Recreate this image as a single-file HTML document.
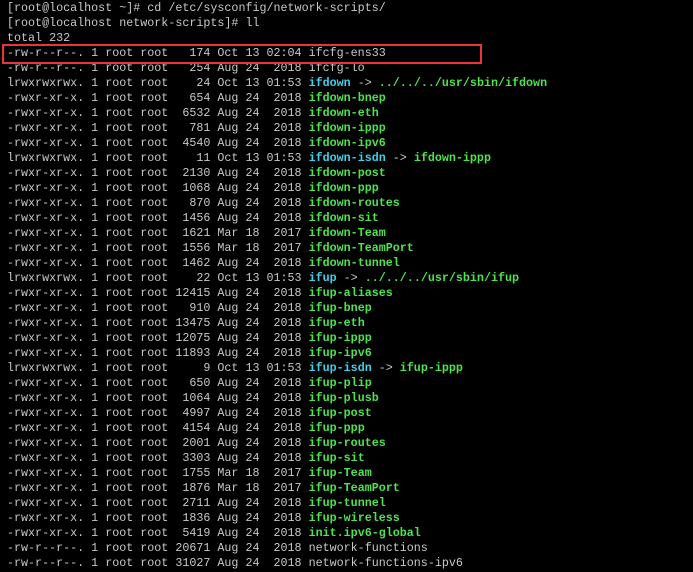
<!DOCTYPE html>
<html><head><style>
html,body{margin:0;padding:0;background:#000;width:693px;height:572px;overflow:hidden}
pre{margin:0;padding:1px 0 0 7px;font-family:"Liberation Mono",monospace;font-size:11.7px;line-height:15px;color:#c8c8c8}
.c{color:#3fd0ea;font-weight:bold}
.g{color:#4ee24e;font-weight:bold}
.box{position:absolute;left:2px;top:44px;width:476px;height:16px;border:2px solid #e8343a}
</style></head><body>
<div class="box"></div>
<pre>[root@localhost ~]# cd /etc/sysconfig/network-scripts/
[root@localhost network-scripts]# ll
total 232
-rw-r--r--. 1 root root   174 Oct 13 02:04 ifcfg-ens33
-rw-r--r--. 1 root root   254 Aug 24  2018 ifcfg-lo
lrwxrwxrwx. 1 root root    24 Oct 13 01:53 <span class="c">ifdown</span> -&gt; <span class="g">../../../usr/sbin/ifdown</span>
-rwxr-xr-x. 1 root root   654 Aug 24  2018 <span class="g">ifdown-bnep</span>
-rwxr-xr-x. 1 root root  6532 Aug 24  2018 <span class="g">ifdown-eth</span>
-rwxr-xr-x. 1 root root   781 Aug 24  2018 <span class="g">ifdown-ippp</span>
-rwxr-xr-x. 1 root root  4540 Aug 24  2018 <span class="g">ifdown-ipv6</span>
lrwxrwxrwx. 1 root root    11 Oct 13 01:53 <span class="c">ifdown-isdn</span> -&gt; <span class="g">ifdown-ippp</span>
-rwxr-xr-x. 1 root root  2130 Aug 24  2018 <span class="g">ifdown-post</span>
-rwxr-xr-x. 1 root root  1068 Aug 24  2018 <span class="g">ifdown-ppp</span>
-rwxr-xr-x. 1 root root   870 Aug 24  2018 <span class="g">ifdown-routes</span>
-rwxr-xr-x. 1 root root  1456 Aug 24  2018 <span class="g">ifdown-sit</span>
-rwxr-xr-x. 1 root root  1621 Mar 18  2017 <span class="g">ifdown-Team</span>
-rwxr-xr-x. 1 root root  1556 Mar 18  2017 <span class="g">ifdown-TeamPort</span>
-rwxr-xr-x. 1 root root  1462 Aug 24  2018 <span class="g">ifdown-tunnel</span>
lrwxrwxrwx. 1 root root    22 Oct 13 01:53 <span class="c">ifup</span> -&gt; <span class="g">../../../usr/sbin/ifup</span>
-rwxr-xr-x. 1 root root 12415 Aug 24  2018 <span class="g">ifup-aliases</span>
-rwxr-xr-x. 1 root root   910 Aug 24  2018 <span class="g">ifup-bnep</span>
-rwxr-xr-x. 1 root root 13475 Aug 24  2018 <span class="g">ifup-eth</span>
-rwxr-xr-x. 1 root root 12075 Aug 24  2018 <span class="g">ifup-ippp</span>
-rwxr-xr-x. 1 root root 11893 Aug 24  2018 <span class="g">ifup-ipv6</span>
lrwxrwxrwx. 1 root root     9 Oct 13 01:53 <span class="c">ifup-isdn</span> -&gt; <span class="g">ifup-ippp</span>
-rwxr-xr-x. 1 root root   650 Aug 24  2018 <span class="g">ifup-plip</span>
-rwxr-xr-x. 1 root root  1064 Aug 24  2018 <span class="g">ifup-plusb</span>
-rwxr-xr-x. 1 root root  4997 Aug 24  2018 <span class="g">ifup-post</span>
-rwxr-xr-x. 1 root root  4154 Aug 24  2018 <span class="g">ifup-ppp</span>
-rwxr-xr-x. 1 root root  2001 Aug 24  2018 <span class="g">ifup-routes</span>
-rwxr-xr-x. 1 root root  3303 Aug 24  2018 <span class="g">ifup-sit</span>
-rwxr-xr-x. 1 root root  1755 Mar 18  2017 <span class="g">ifup-Team</span>
-rwxr-xr-x. 1 root root  1876 Mar 18  2017 <span class="g">ifup-TeamPort</span>
-rwxr-xr-x. 1 root root  2711 Aug 24  2018 <span class="g">ifup-tunnel</span>
-rwxr-xr-x. 1 root root  1836 Aug 24  2018 <span class="g">ifup-wireless</span>
-rwxr-xr-x. 1 root root  5419 Aug 24  2018 <span class="g">init.ipv6-global</span>
-rw-r--r--. 1 root root 20671 Aug 24  2018 network-functions
-rw-r--r--. 1 root root 31027 Aug 24  2018 network-functions-ipv6</pre>
</body></html>
